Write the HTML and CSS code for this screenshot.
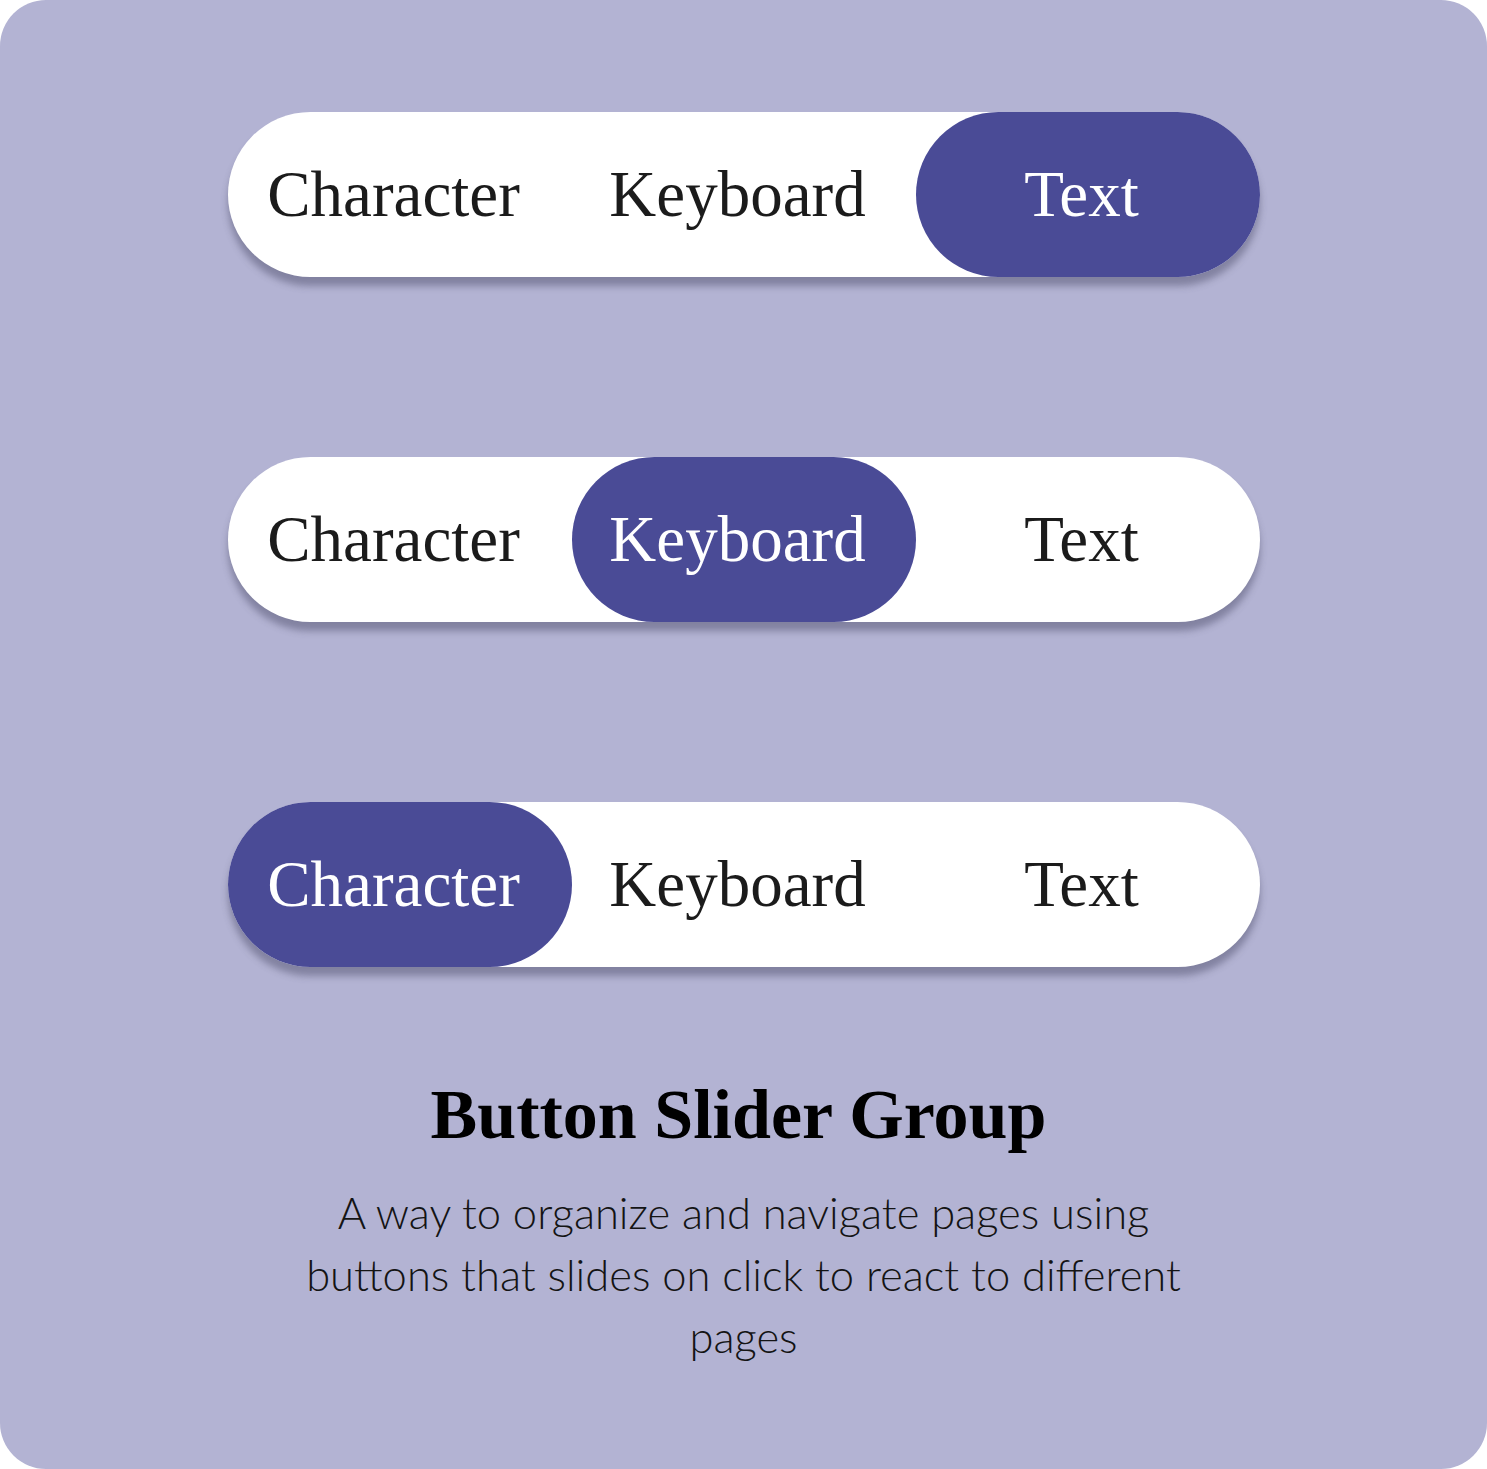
FILE: index.html
```html
<!DOCTYPE html>
<html lang="en">
<head>
<meta charset="utf-8">
<title>Button Slider Group</title>
<link rel="stylesheet" href="styles.css">
</head>
<body>
<main class="card">
  <div class="groups">
    <div class="slider">
      <span class="seg">Character</span>
      <span class="seg">Keyboard</span>
      <span class="seg active">Text</span>
    </div>
    <div class="slider">
      <span class="seg">Character</span>
      <span class="seg active">Keyboard</span>
      <span class="seg">Text</span>
    </div>
    <div class="slider">
      <span class="seg active">Character</span>
      <span class="seg">Keyboard</span>
      <span class="seg">Text</span>
    </div>
  </div>
  <h1 class="title">Button Slider Group</h1>
  <p class="desc">A way to organize and navigate pages using buttons that slides on click to react to different pages</p>
</main>
</body>
</html>
```
FILE: styles.css
```css
html, body {
  margin: 0;
  padding: 0;
  background: #ffffff;
}
.card {
  width: 1487px;
  height: 1469px;
  box-sizing: border-box;
  background: #b3b3d3;
  border-radius: 46px;
  padding-top: 112px;
  display: flex;
  flex-direction: column;
  align-items: center;
}
.groups {
  display: flex;
  flex-direction: column;
  gap: 180px;
  align-items: center;
}
.slider {
  width: 1032px;
  height: 165px;
  background: #ffffff;
  border-radius: 83px;
  display: grid;
  grid-template-columns: repeat(3, 1fr);
  box-shadow: 0 9px 7px rgba(70, 70, 100, 0.45);
}
.seg {
  display: flex;
  align-items: center;
  justify-content: center;
  font-family: "Liberation Serif", "Times New Roman", serif;
  font-size: 65px;
  color: #1b1b1b;
  border-radius: 83px;
  padding-right: 12px;
}
.seg.active {
  background: #4a4b96;
  color: #ffffff;
}
.title {
  margin: 108px 0 0 0;
  font-family: "Liberation Serif", "Times New Roman", serif;
  font-weight: 700;
  font-size: 70px;
  line-height: 80px;
  color: #000000;
  padding-right: 10px;
}
.desc {
  margin: 26px 0 0 0;
  width: 880px;
  text-align: center;
  font-family: "Lato", "Open Sans", sans-serif;
  font-weight: 300;
  font-size: 43.5px;
  line-height: 62px;
  color: #141414;
}
```
